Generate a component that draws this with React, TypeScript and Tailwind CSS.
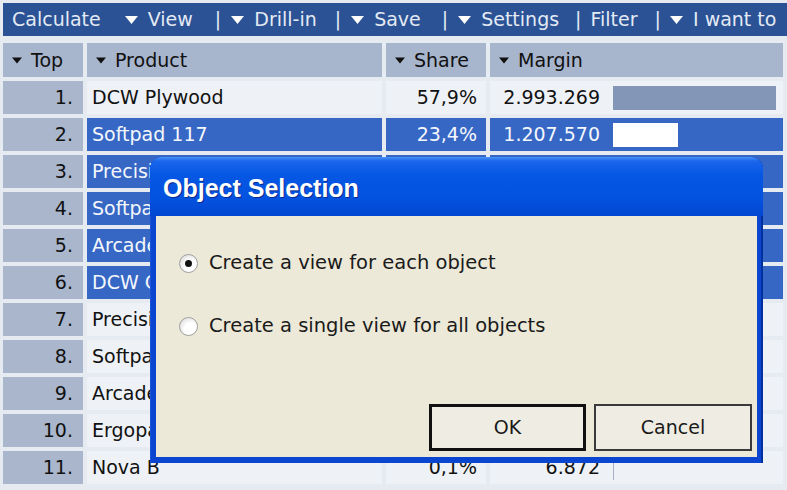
import React from "react";

const Tri = ({ w = 13, h = 8, color = "#fff" }: { w?: number; h?: number; color?: string }) => (
  <svg width={w} height={h} viewBox="0 0 10 6" className="shrink-0">
    <polygon points="0,0 10,0 5,6" fill={color} />
  </svg>
);

type Row = { n: number; name: string; share: string; margin: string; bar: number; sel: boolean };

const rows: Row[] = [
  { n: 1, name: "DCW Plywood", share: "57,9%", margin: "2.993.269", bar: 163, sel: false },
  { n: 2, name: "Softpad 117", share: "23,4%", margin: "1.207.570", bar: 65, sel: true },
  { n: 3, name: "Precision 300", share: "6,2%", margin: "320.114", bar: 17, sel: true },
  { n: 4, name: "Softpad 200", share: "4,8%", margin: "248.310", bar: 14, sel: true },
  { n: 5, name: "Arcade 45", share: "3,1%", margin: "160.420", bar: 9, sel: true },
  { n: 6, name: "DCW Oak", share: "2,0%", margin: "103.560", bar: 6, sel: true },
  { n: 7, name: "Precision 100", share: "1,3%", margin: "67.208", bar: 4, sel: false },
  { n: 8, name: "Softpad 50", share: "0,8%", margin: "41.370", bar: 2, sel: false },
  { n: 9, name: "Arcade 20", share: "0,3%", margin: "15.512", bar: 1, sel: false },
  { n: 10, name: "Ergopad", share: "0,2%", margin: "10.344", bar: 1, sel: false },
  { n: 11, name: "Nova B", share: "0,1%", margin: "6.872", bar: 1, sel: false },
];

const Header = ({ label }: { label: string }) => (
  <div className="h-[34px] bg-[#a8b6cd] flex items-center pl-[9px] gap-[9px] text-[#111]">
    <Tri w={10} h={7} color="#111" />
    <span>{label}</span>
  </div>
);

const Radio = ({ checked }: { checked: boolean }) => (
  <div className="w-[19px] h-[19px] rounded-full border border-[#a0a0a0] bg-[radial-gradient(circle_at_65%_65%,#ffffff_40%,#e4e4e4_75%,#b4b4b4_100%)] flex items-center justify-center shrink-0">
    {checked && <div className="w-[7px] h-[7px] rounded-full bg-[#111]" />}
  </div>
);

export default function App() {
  return (
    <div className="relative w-[787px] h-[490px] overflow-hidden bg-[#e6eaf1] font-['DejaVu_Sans',sans-serif] text-[19px] leading-none">
      {/* Toolbar */}
      <div className="mt-[3px] ml-[3px] h-[33px] bg-[#2a5294] flex items-center text-[#e4eaf4] pl-[9px] whitespace-nowrap overflow-hidden">
        <span>Calculate</span>
        <span className="ml-[24px] flex items-center gap-[10px]"><Tri /><span>View</span></span>
        <span className="ml-[22px]">|</span>
        <span className="ml-[10px] flex items-center gap-[10px]"><Tri /><span>Drill-in</span></span>
        <span className="ml-[18px]">|</span>
        <span className="ml-[10px] flex items-center gap-[10px]"><Tri /><span>Save</span></span>
        <span className="ml-[21px]">|</span>
        <span className="ml-[10px] flex items-center gap-[10px]"><Tri /><span>Settings</span></span>
        <span className="ml-[16px]">|</span>
        <span className="ml-[9px]">Filter</span>
        <span className="ml-[17px]">|</span>
        <span className="ml-[9px] flex items-center gap-[10px]"><Tri /><span>I want to</span></span>
      </div>

      {/* Table */}
      <div className="mt-[7px] ml-[3px] grid grid-cols-[80px_295px_100px_293px] gap-x-[4px] gap-y-[4px]">
        <Header label="Top" />
        <Header label="Product" />
        <Header label="Share" />
        <Header label="Margin" />
        {rows.map((r) => {
          const cell = r.sel ? "bg-[#3767c4] text-[#f4f7fc]" : "bg-[#eef1f6] text-[#111]";
          return (
            <React.Fragment key={r.n}>
              <div className="h-[33px] bg-[#a9b6cc] text-[#111] flex items-center justify-end pr-[10px]">{r.n}.</div>
              <div className={`h-[33px] ${cell} flex items-center pl-[5px] whitespace-nowrap overflow-hidden`}>{r.name}</div>
              <div className={`h-[33px] ${cell} flex items-center justify-end pr-[9px]`}>{r.share}</div>
              <div className={`h-[33px] ${cell} flex items-center`}>
                <span className="w-[110px] text-right">{r.margin}</span>
                <div
                  className={`ml-[13px] h-[24px] ${r.sel ? "bg-white" : r.bar > 2 ? "bg-[#8496b8]" : "bg-[#a6b0c2]"}`}
                  style={{ width: r.bar }}
                />
              </div>
            </React.Fragment>
          );
        })}
      </div>

      {/* Dialog */}
      <div className="absolute left-[150px] top-[157px] w-[613px] h-[306px] rounded-t-[12px] overflow-hidden bg-[#0a46cf] flex flex-col shadow-[inset_-2px_0_0_#00309e,inset_1px_0_0_#1a55d8]">
        <div className="h-[59px] shrink-0 bg-[linear-gradient(180deg,#4a93f8_0%,#1a66ec_7%,#0657e4_30%,#0352e0_70%,#0247d2_100%)] flex items-center pl-[13px] pt-[4px]">
          <span className="font-['Liberation_Sans',sans-serif] font-bold text-[25px] text-white [text-shadow:1px_1px_0_#0a2b8c]">
            Object Selection
          </span>
        </div>
        <div className="flex-1 mx-[6px] mb-[6px] bg-[#ece9d8] text-[#1a1a1a] flex flex-col">
          <div className="mt-[35px] ml-[23px] h-[24px] flex items-center gap-[11px]">
            <Radio checked />
            <span className="text-[19.5px]">Create a view for each object</span>
          </div>
          <div className="mt-[39px] ml-[23px] h-[24px] flex items-center gap-[11px]">
            <Radio checked={false} />
            <span className="text-[19.5px]">Create a single view for all objects</span>
          </div>
          <div className="mt-auto mb-[6px] mr-[5px] flex justify-end gap-[8px]">
            <div className="w-[157px] h-[47px] border-[3px] border-[#111] bg-[#efede3] flex items-center justify-center">OK</div>
            <div className="w-[158px] h-[47px] border-2 border-[#3a3a3a] bg-[#efede3] flex items-center justify-center">Cancel</div>
          </div>
        </div>
      </div>
    </div>
  );
}
